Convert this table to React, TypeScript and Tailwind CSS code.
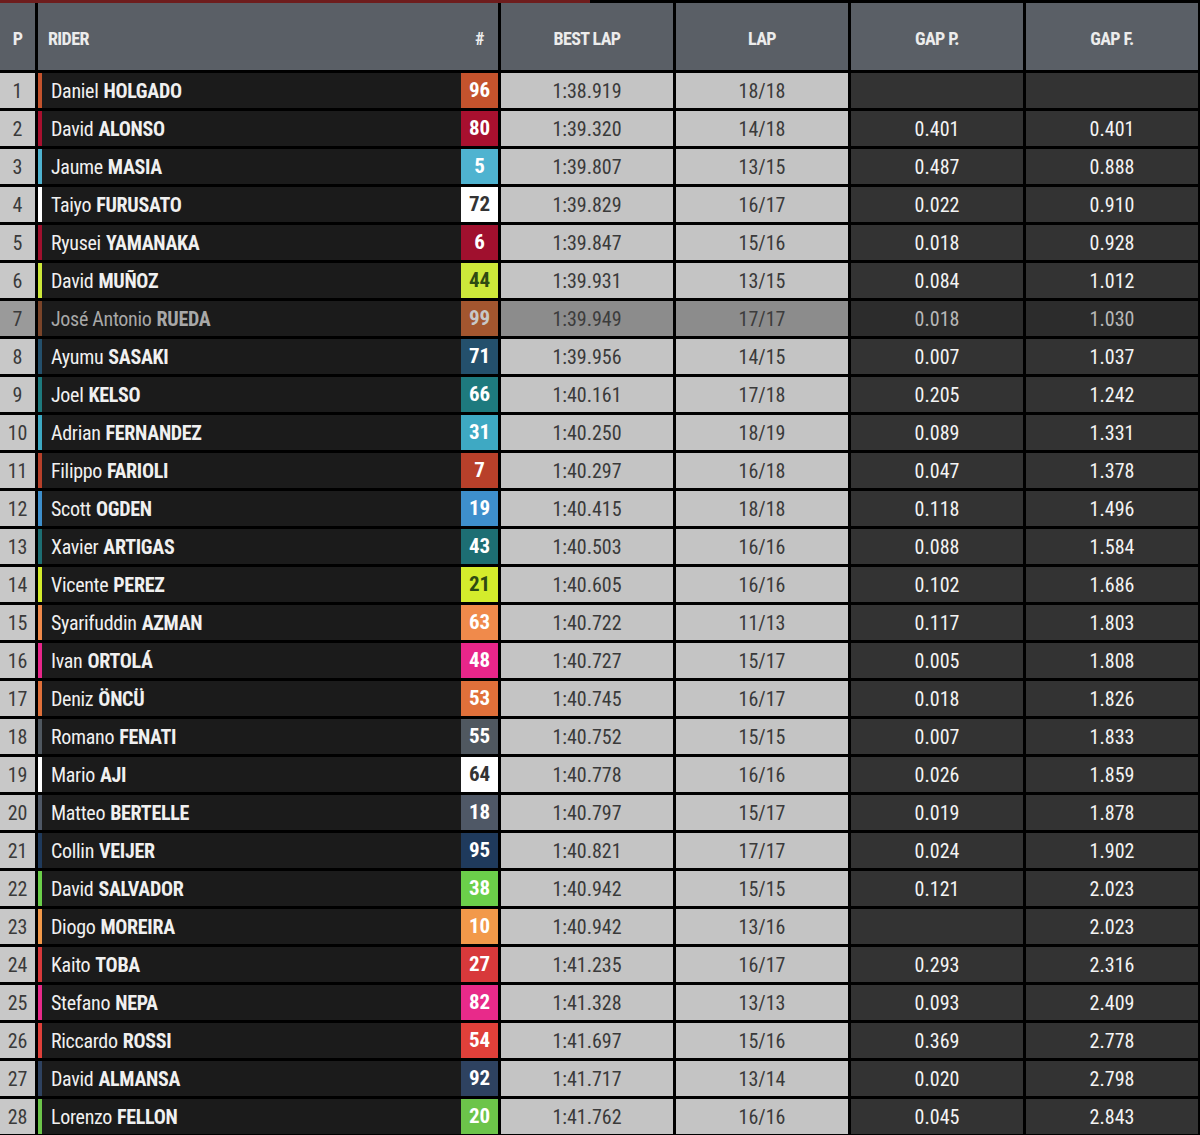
import React from "react";

type Row = {
  p: number;
  first: string;
  last: string;
  num: string;
  color: string;
  numText?: string;
  best: string;
  lap: string;
  gapP: string;
  gapF: string;
  dim?: boolean;
};

const rows: Row[] = [
  { p: 1, first: "Daniel", last: "HOLGADO", num: "96", color: "#c4532d", best: "1:38.919", lap: "18/18", gapP: "", gapF: "" },
  { p: 2, first: "David", last: "ALONSO", num: "80", color: "#a8102f", best: "1:39.320", lap: "14/18", gapP: "0.401", gapF: "0.401" },
  { p: 3, first: "Jaume", last: "MASIA", num: "5", color: "#4fb3d0", best: "1:39.807", lap: "13/15", gapP: "0.487", gapF: "0.888" },
  { p: 4, first: "Taiyo", last: "FURUSATO", num: "72", color: "#ffffff", numText: "#333333", best: "1:39.829", lap: "16/17", gapP: "0.022", gapF: "0.910" },
  { p: 5, first: "Ryusei", last: "YAMANAKA", num: "6", color: "#a0102e", best: "1:39.847", lap: "15/16", gapP: "0.018", gapF: "0.928" },
  { p: 6, first: "David", last: "MUÑOZ", num: "44", color: "#cde83a", numText: "#2e4a12", best: "1:39.931", lap: "13/15", gapP: "0.084", gapF: "1.012" },
  { p: 7, first: "José Antonio", last: "RUEDA", num: "99", color: "#a3562f", numText: "#c8c8c8", best: "1:39.949", lap: "17/17", gapP: "0.018", gapF: "1.030", dim: true },
  { p: 8, first: "Ayumu", last: "SASAKI", num: "71", color: "#24506c", best: "1:39.956", lap: "14/15", gapP: "0.007", gapF: "1.037" },
  { p: 9, first: "Joel", last: "KELSO", num: "66", color: "#1e7a7e", best: "1:40.161", lap: "17/18", gapP: "0.205", gapF: "1.242" },
  { p: 10, first: "Adrian", last: "FERNANDEZ", num: "31", color: "#3ea9c3", best: "1:40.250", lap: "18/19", gapP: "0.089", gapF: "1.331" },
  { p: 11, first: "Filippo", last: "FARIOLI", num: "7", color: "#b8402a", best: "1:40.297", lap: "16/18", gapP: "0.047", gapF: "1.378" },
  { p: 12, first: "Scott", last: "OGDEN", num: "19", color: "#3e8fcc", best: "1:40.415", lap: "18/18", gapP: "0.118", gapF: "1.496" },
  { p: 13, first: "Xavier", last: "ARTIGAS", num: "43", color: "#1d6e73", best: "1:40.503", lap: "16/16", gapP: "0.088", gapF: "1.584" },
  { p: 14, first: "Vicente", last: "PEREZ", num: "21", color: "#d4ec2c", numText: "#2e4a12", best: "1:40.605", lap: "16/16", gapP: "0.102", gapF: "1.686" },
  { p: 15, first: "Syarifuddin", last: "AZMAN", num: "63", color: "#f08a4b", best: "1:40.722", lap: "11/13", gapP: "0.117", gapF: "1.803" },
  { p: 16, first: "Ivan", last: "ORTOLÁ", num: "48", color: "#e8268a", best: "1:40.727", lap: "15/17", gapP: "0.005", gapF: "1.808" },
  { p: 17, first: "Deniz", last: "ÖNCÜ", num: "53", color: "#e0703a", best: "1:40.745", lap: "16/17", gapP: "0.018", gapF: "1.826" },
  { p: 18, first: "Romano", last: "FENATI", num: "55", color: "#505860", best: "1:40.752", lap: "15/15", gapP: "0.007", gapF: "1.833" },
  { p: 19, first: "Mario", last: "AJI", num: "64", color: "#ffffff", numText: "#333333", best: "1:40.778", lap: "16/16", gapP: "0.026", gapF: "1.859" },
  { p: 20, first: "Matteo", last: "BERTELLE", num: "18", color: "#4f5866", best: "1:40.797", lap: "15/17", gapP: "0.019", gapF: "1.878" },
  { p: 21, first: "Collin", last: "VEIJER", num: "95", color: "#1f3a5c", best: "1:40.821", lap: "17/17", gapP: "0.024", gapF: "1.902" },
  { p: 22, first: "David", last: "SALVADOR", num: "38", color: "#6bcf4a", best: "1:40.942", lap: "15/15", gapP: "0.121", gapF: "2.023" },
  { p: 23, first: "Diogo", last: "MOREIRA", num: "10", color: "#f2994a", best: "1:40.942", lap: "13/16", gapP: "", gapF: "2.023" },
  { p: 24, first: "Kaito", last: "TOBA", num: "27", color: "#d8393b", best: "1:41.235", lap: "16/17", gapP: "0.293", gapF: "2.316" },
  { p: 25, first: "Stefano", last: "NEPA", num: "82", color: "#e82a8a", best: "1:41.328", lap: "13/13", gapP: "0.093", gapF: "2.409" },
  { p: 26, first: "Riccardo", last: "ROSSI", num: "54", color: "#e0403a", best: "1:41.697", lap: "15/16", gapP: "0.369", gapF: "2.778" },
  { p: 27, first: "David", last: "ALMANSA", num: "92", color: "#2e4260", best: "1:41.717", lap: "13/14", gapP: "0.020", gapF: "2.798" },
  { p: 28, first: "Lorenzo", last: "FELLON", num: "20", color: "#6cc44a", best: "1:41.762", lap: "16/16", gapP: "0.045", gapF: "2.843" },
];

const font = { fontFamily: '"Liberation Sans Narrow", "Roboto Condensed", "Liberation Sans", sans-serif' };

const head =
  "h-[67px] bg-[#5a5f66] flex items-center justify-center pt-[4px] text-[18px] font-bold text-[#ececec] tracking-[-0.6px]";

export default function App() {
  return (
    <div className="w-[1200px] h-[1135px] bg-black overflow-hidden" style={font}>
      <div className="flex h-[3px]">
        <div className="w-[590px] bg-[#6e1d1d]" />
      </div>
      <div className="grid grid-cols-[35px_460px_172px_172px_172px_172px] gap-x-[3px] gap-y-[3px]">
        <div className={head}>P</div>
        <div className="h-[67px] bg-[#5a5f66] flex items-center justify-between pt-[4px] pl-[10px] pr-[14px] text-[18px] font-bold text-[#ececec] tracking-[-0.6px]">
          <span>RIDER</span>
          <span>#</span>
        </div>
        <div className={head}>BEST LAP</div>
        <div className={head}>LAP</div>
        <div className={head}>GAP P.</div>
        <div className={head}>GAP F.</div>

        {rows.map((r) => (
          <React.Fragment key={r.p}>
            <div
              className={
                "h-[35px] flex items-center justify-center text-[20px] " +
                (r.dim ? "bg-[#9a9a9a] text-[#3a3a3a]" : "bg-[#c8c8c8] text-[#3a3a3a]")
              }
            >
              {r.p}
            </div>
            <div className="h-[35px] flex bg-[#1b1b1b]">
              <div className="w-[4px] h-full" style={{ backgroundColor: r.color, opacity: r.dim ? 0.7 : 1 }} />
              <div
                className={
                  "flex-1 flex items-center pl-[9px] text-[20px] tracking-[-0.3px] " +
                  (r.dim ? "text-[#a8a8a8]" : "text-[#f0f0f0]")
                }
              >
                <span>{r.first}</span>
                <span className="font-bold ml-[5px]">{r.last}</span>
              </div>
              <div
                className="w-[37px] h-full flex items-center justify-center text-[21px] font-bold"
                style={{ backgroundColor: r.color, color: r.numText ?? "#ffffff" }}
              >
                {r.num}
              </div>
            </div>
            <div
              className={
                "h-[35px] flex items-center justify-center text-[20px] " +
                (r.dim ? "bg-[#8c8c8c] text-[#3c3c3c]" : "bg-[#c4c4c4] text-[#3a3a3a]")
              }
            >
              {r.best}
            </div>
            <div
              className={
                "h-[35px] flex items-center justify-center text-[20px] " +
                (r.dim ? "bg-[#8c8c8c] text-[#3c3c3c]" : "bg-[#c4c4c4] text-[#3a3a3a]")
              }
            >
              {r.lap}
            </div>
            <div
              className={
                "h-[35px] flex items-center justify-center text-[20px] " +
                (r.dim ? "bg-[#2c2c2c] text-[#b8b8b8]" : "bg-[#333333] text-[#f4f4f4]")
              }
            >
              {r.gapP}
            </div>
            <div
              className={
                "h-[35px] flex items-center justify-center text-[20px] " +
                (r.dim ? "bg-[#2c2c2c] text-[#b8b8b8]" : "bg-[#333333] text-[#f4f4f4]")
              }
            >
              {r.gapF}
            </div>
          </React.Fragment>
        ))}
      </div>
    </div>
  );
}
